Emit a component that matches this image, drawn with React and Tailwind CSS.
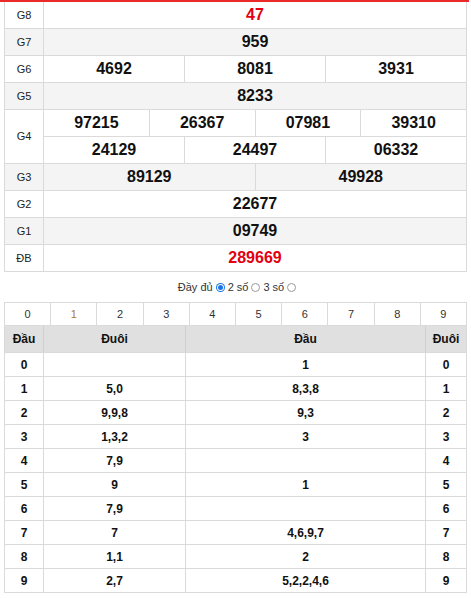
const font = { fontFamily: '"Liberation Sans", Arial, sans-serif' };

const prizes = [
  { label: "G8", rows: [["47"]], red: true },
  { label: "G7", rows: [["959"]] },
  { label: "G6", rows: [["4692", "8081", "3931"]] },
  { label: "G5", rows: [["8233"]] },
  { label: "G4", rows: [["97215", "26367", "07981", "39310"], ["24129", "24497", "06332"]] },
  { label: "G3", rows: [["89129", "49928"]] },
  { label: "G2", rows: [["22677"]] },
  { label: "G1", rows: [["09749"]] },
  { label: "ĐB", rows: [["289669"]], red: true },
];

const loto = [
  ["0", "", "1", "0"],
  ["1", "5,0", "8,3,8", "1"],
  ["2", "9,9,8", "9,3", "2"],
  ["3", "1,3,2", "3", "3"],
  ["4", "7,9", "", "4"],
  ["5", "9", "1", "5"],
  ["6", "7,9", "", "6"],
  ["7", "7", "4,6,9,7", "7"],
  ["8", "1,1", "2", "8"],
  ["9", "2,7", "5,2,2,4,6", "9"],
];

function Radio({ checked }) {
  return checked ? (
    <span className="mx-[3px] inline-flex h-[9px] w-[9px] items-center justify-center rounded-full bg-[#1a73e8]">
      <span className="flex h-[7px] w-[7px] items-center justify-center rounded-full bg-white">
        <span className="h-[5px] w-[5px] rounded-full bg-[#1a73e8]" />
      </span>
    </span>
  ) : (
    <span className="mx-[3px] inline-block h-[9px] w-[9px] rounded-full border border-[#9a9a9a] bg-white" />
  );
}

function PrizeRow({ prize, index }) {
  const bg = index % 2 === 1 ? "bg-[#f4f4f4]" : "bg-white";
  return (
    <div className={`flex border-b border-[#dadada] ${bg}`}>
      <div className="flex w-[39px] shrink-0 items-center justify-center border-r border-[#dadada] text-[11px] text-[#222]">
        {prize.label}
      </div>
      <div className="flex flex-1 flex-col">
        {prize.rows.map((row, r) => (
          <div
            key={r}
            className={`flex h-[26px] ${r > 0 ? "h-[27px] border-t border-[#dadada]" : ""}`}
          >
            {row.map((n, i) => (
              <div
                key={n}
                className={`flex flex-1 items-center justify-center text-[16px] font-bold ${
                  i > 0 ? "border-l border-[#dadada]" : ""
                } ${prize.red ? "text-[#e3000f]" : "text-[#111]"}`}
              >
                {n}
              </div>
            ))}
          </div>
        ))}
      </div>
    </div>
  );
}

export default function App() {
  return (
    <div className="h-[598px] w-[471px] bg-white" style={font}>
      <div className="h-[2px] w-[469px] bg-[#ea2a2a]" />

      <div className="ml-[4px] w-[463px] border-x border-[#dadada]">
        {prizes.map((p, i) => (
          <PrizeRow key={p.label} prize={p} index={i} />
        ))}
      </div>

      <div className="flex h-[30px] items-center justify-center pl-[6px] text-[11px] text-[#333]">
        <span>Đầy đủ</span>
        <Radio checked />
        <span>2 số</span>
        <Radio />
        <span>3 số</span>
        <Radio />
      </div>

      <div className="ml-[4px] w-[463px] border-x border-t border-[#dadada]">
        <div className="flex h-[23px] border-b border-[#dadada]">
          {["0", "1", "2", "3", "4", "5", "6", "7", "8", "9"].map((d, i) => (
            <div
              key={d}
              className={`flex flex-1 items-center justify-center text-[11px] ${
                i > 0 ? "border-l border-[#dadada]" : ""
              } ${d === "1" ? "text-[#b07d12]" : "text-[#333]"}`}
            >
              {d}
            </div>
          ))}
        </div>

        <div className="flex h-[27px] border-b border-[#dadada] bg-[#e0e0e0] text-[12px] font-bold text-[#111]">
          <div className="flex w-[39px] items-center justify-center border-r border-[#d0d0d0]">Đầu</div>
          <div className="flex w-[142px] items-center justify-center border-r border-[#d0d0d0]">Đuôi</div>
          <div className="flex w-[240px] items-center justify-center border-r border-[#d0d0d0]">Đầu</div>
          <div className="flex flex-1 items-center justify-center">Đuôi</div>
        </div>

        {loto.map((row) => (
          <div key={row[0]} className="flex h-[24px] border-b border-[#dadada] text-[12px] font-bold text-[#111]">
            <div className="flex w-[39px] items-center justify-center border-r border-[#dadada]">{row[0]}</div>
            <div className="flex w-[142px] items-center justify-center border-r border-[#dadada]">{row[1]}</div>
            <div className="flex w-[240px] items-center justify-center border-r border-[#dadada]">{row[2]}</div>
            <div className="flex flex-1 items-center justify-center">{row[3]}</div>
          </div>
        ))}
      </div>
    </div>
  );
}
